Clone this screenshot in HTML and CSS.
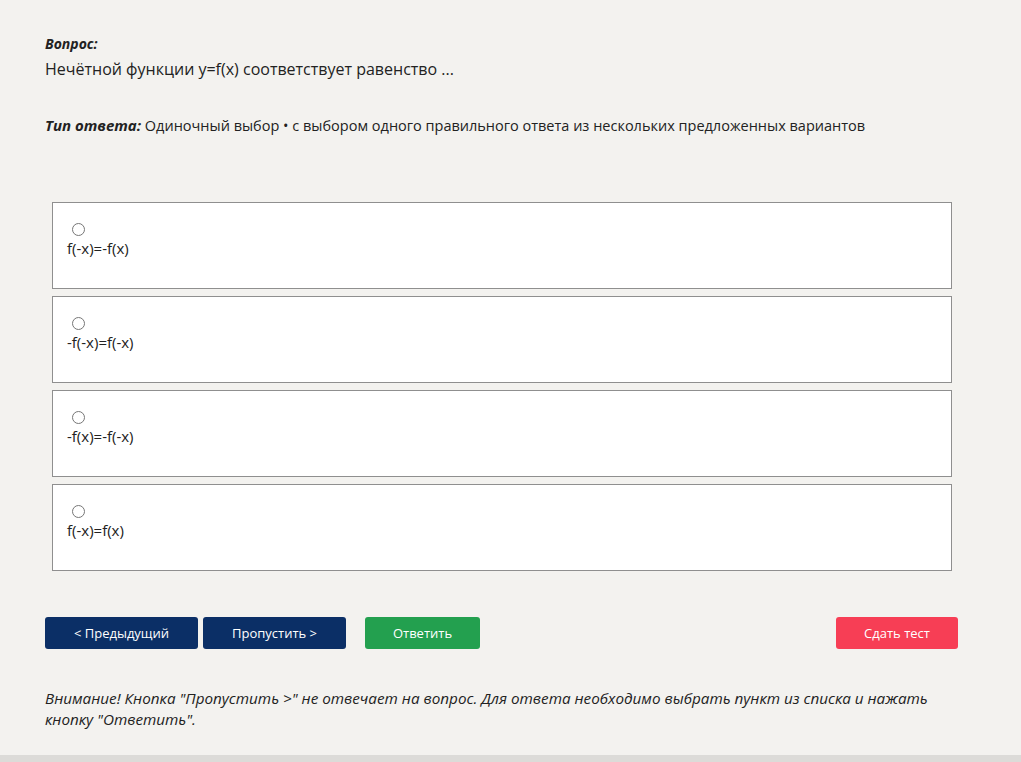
FILE: index.html
```html
<!DOCTYPE html>
<html lang="ru">
<head>
<meta charset="utf-8">
<title>Вопрос</title>
<link rel="stylesheet" href="styles.css">
</head>
<body>
<div class="page">
  <div class="content">
    <div class="label">Вопрос:</div>
    <div class="question">Нечётной функции y=f(x) соответствует равенство ...</div>
    <div class="type"><span class="label">Тип ответа:</span> Одиночный выбор • с выбором одного правильного ответа из нескольких предложенных вариантов</div>

    <div class="options">
      <label class="option"><input type="radio" name="a"><br>f(-x)=-f(x)</label>
      <label class="option"><input type="radio" name="a"><br>-f(-x)=f(-x)</label>
      <label class="option"><input type="radio" name="a"><br>-f(x)=-f(-x)</label>
      <label class="option"><input type="radio" name="a"><br>f(-x)=f(x)</label>
    </div>

    <div class="buttons">
      <button class="btn btn-navy btn-prev">&lt; Предыдущий</button>
      <button class="btn btn-navy btn-skip">Пропустить &gt;</button>
      <button class="btn btn-green">Ответить</button>
      <span class="spacer"></span>
      <button class="btn btn-red">Сдать тест</button>
    </div>

    <p class="note">Внимание! Кнопка "Пропустить &gt;" не отвечает на вопрос. Для ответа необходимо выбрать пункт из списка и нажать кнопку "Ответить".</p>
  </div>
  <div class="bottom"></div>
</div>
</body>
</html>
```
FILE: styles.css
```css
html, body {
  margin: 0;
  padding: 0;
  background: #f3f2ef;
}
body {
  font-family: "Open Sans", "Noto Sans", sans-serif;
  color: #222;
}
.page {
  height: 762px;
  display: flex;
  flex-direction: column;
}
.content {
  flex: 1;
  padding: 33px 63px 0 45px;
}
.label {
  font-weight: 700;
  font-style: italic;
  font-size: 14px;
  line-height: 22px;
}
.question {
  font-size: 16px;
  line-height: 26px;
  margin-top: 1px;
}
.type {
  font-size: 14.5px;
  line-height: 22px;
  margin-top: 32px;
}
.type .label {
  display: inline;
  font-size: 15px;
}
.options {
  margin: 65px 6px 0 7px;
  display: flex;
  flex-direction: column;
  gap: 7px;
}
.option {
  display: block;
  height: 87px;
  box-sizing: border-box;
  background: #fff;
  border: 1px solid #8f8f8f;
  padding: 17px 14px 0 14px;
  font-size: 15px;
  line-height: 19px;
}
.option input {
  margin: 3px 3px 0 5px;
  width: 13px;
  height: 13px;
  vertical-align: top;
}
.buttons {
  display: flex;
  margin-top: 46px;
  gap: 5px;
}
.btn {
  height: 32px;
  border: none;
  border-radius: 3px;
  color: #fff;
  font-family: "Open Sans", "Noto Sans", sans-serif;
  font-size: 13px;
  padding: 0;
}
.btn-navy { background: #0b2f66; }
.btn-prev { width: 153px; }
.btn-skip { width: 143px; }
.btn-green { background: #23a04f; width: 115px; margin-left: 14px; }
.btn-red { background: #f73e55; width: 122px; }
.spacer { flex: 1; }
.note {
  margin: 39px 0 0 0;
  font-size: 15.25px;
  font-style: italic;
  line-height: 21px;
}
.bottom {
  height: 7px;
  background: #dcdbd8;
}
```
